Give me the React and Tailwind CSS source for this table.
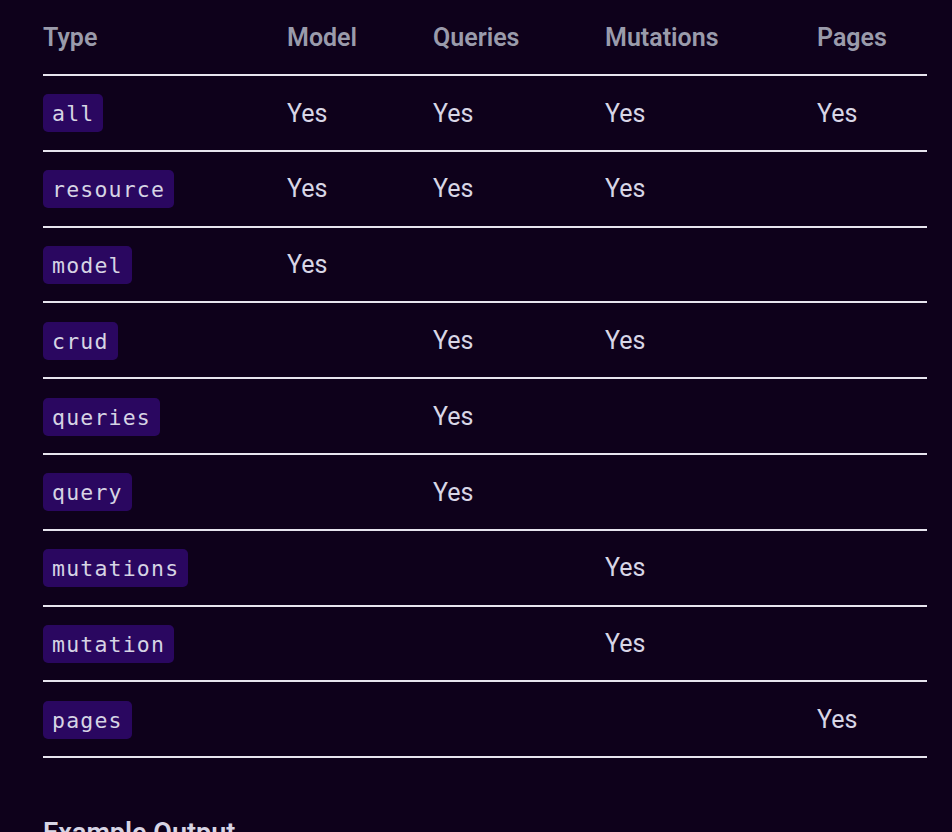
export default function App() {
  const rows = [
    ["all", 1, 1, 1, 1],
    ["resource", 1, 1, 1, 0],
    ["model", 1, 0, 0, 0],
    ["crud", 0, 1, 1, 0],
    ["queries", 0, 1, 0, 0],
    ["query", 0, 1, 0, 0],
    ["mutations", 0, 0, 1, 0],
    ["mutation", 0, 0, 1, 0],
    ["pages", 0, 0, 0, 1],
  ];
  const grid = "grid grid-cols-[244px_146px_172px_212px_110px]";
  return (
    <div className="min-h-[832px] w-full bg-[#0e011b] overflow-hidden" style={{ fontFamily: "Roboto, 'Noto Sans', sans-serif" }}>
      <div className="pl-[43px] pr-[25px]">
        <div className={`${grid} h-[76px] items-center border-b-2 border-[#e6e4ee] pt-[2px] text-[25px] font-semibold text-[#9a9bab]`}>
          <div>Type</div>
          <div>Model</div>
          <div>Queries</div>
          <div>Mutations</div>
          <div>Pages</div>
        </div>
        {rows.map((r) => (
          <div key={r[0]} className={`${grid} h-[75.8px] items-center border-b-2 border-[#e6e4ee] pt-[1px] text-[25px] text-[#d8d6e6]`}>
            <div>
              <code
                className="inline-block rounded-[5px] bg-[#2a0760] px-[9px] h-[38px] leading-[39px] text-[21.5px] tracking-[1.2px] text-[#d6d4e4]"
                style={{ fontFamily: "'DejaVu Sans Mono', 'Liberation Mono', monospace" }}
              >
                {r[0]}
              </code>
            </div>
            {r.slice(1).map((v, i) => (
              <div key={i}>{v ? "Yes" : ""}</div>
            ))}
          </div>
        ))}
        <h2 className="mt-[57px] text-[27px] font-semibold leading-[36px] text-[#d6d4e4]">Example Output</h2>
      </div>
    </div>
  );
}
